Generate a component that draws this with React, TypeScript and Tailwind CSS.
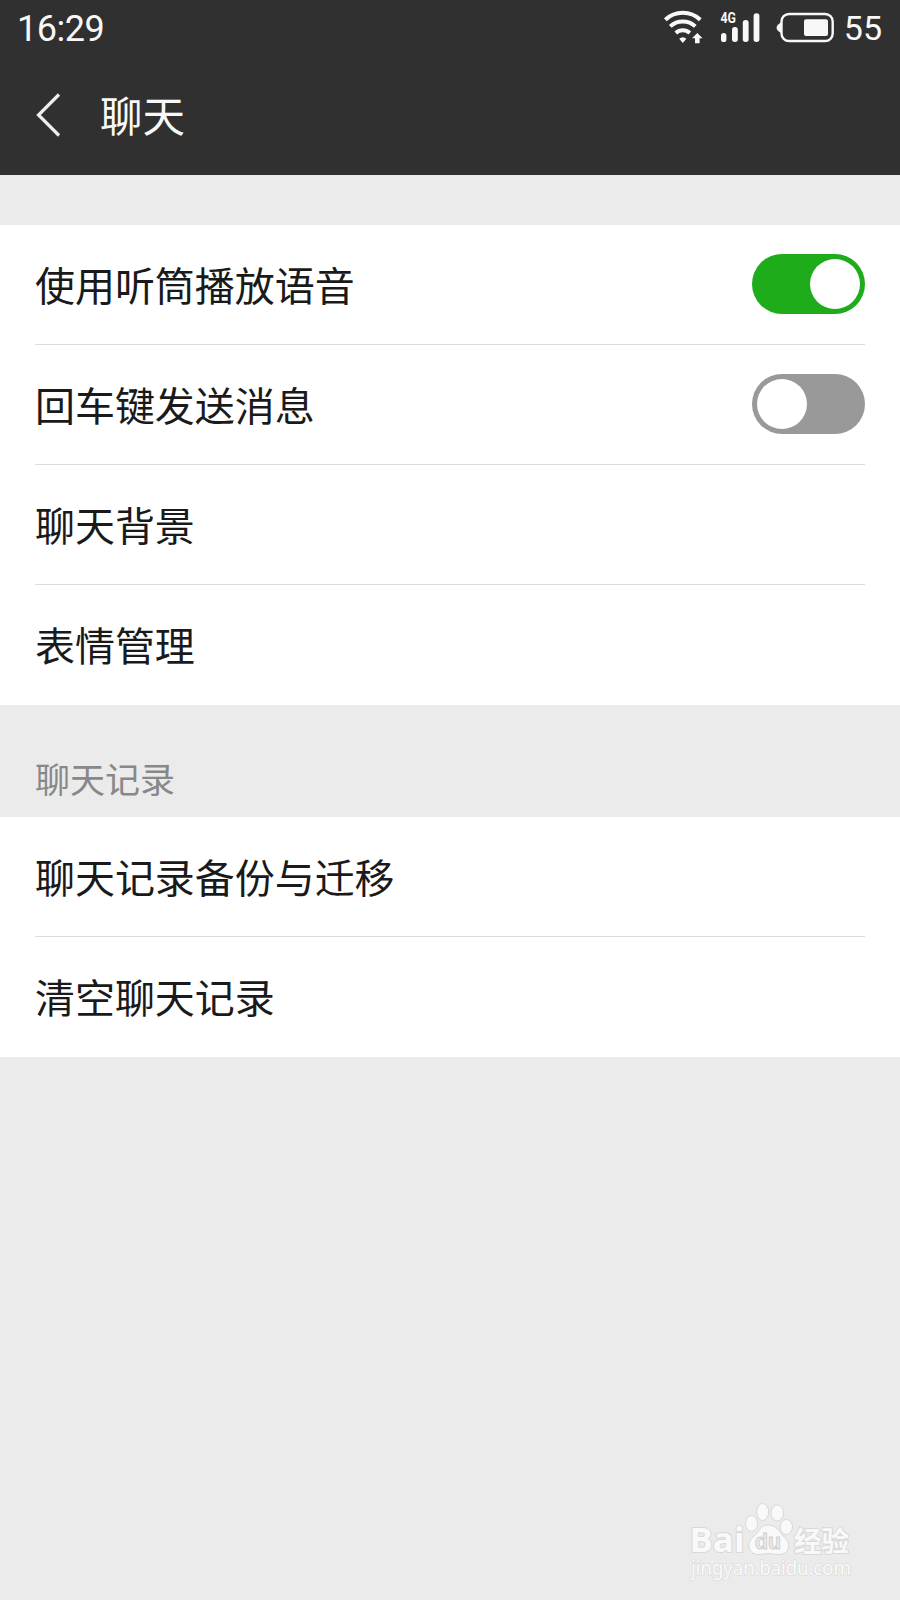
import type { ReactNode } from 'react';

function Toggle({ on }: { on: boolean }) {
  return (
    <button
      role="switch"
      aria-checked={on}
      className={
        on
          ? 'mb-[2px] flex h-[60px] w-[113px] items-center justify-end rounded-full bg-[#1eac1b] p-[5px]'
          : 'mb-[2px] flex h-[60px] w-[113px] items-center justify-start rounded-full bg-[#999999] p-[5px]'
      }
    >
      <span className="size-[50px] rounded-full bg-white" />
    </button>
  );
}

function Row({ label, last, children }: { label: string; last?: boolean; children?: ReactNode }) {
  return (
    <div
      className={
        last
          ? 'flex h-[120px] items-center justify-between'
          : 'flex h-[120px] items-center justify-between border-b border-[#dcdcdc]'
      }
    >
      <span
        className={
          last
            ? 'pb-[2px] text-[40px] leading-[60px] tracking-[-0.05px] text-[#1a1a1a]'
            : 'pb-[1px] text-[40px] leading-[60px] tracking-[-0.05px] text-[#1a1a1a]'
        }
      >
        {label}
      </span>
      {children}
    </div>
  );
}

function StatusBar() {
  return (
    <div className="flex h-14 items-center justify-between pt-[2px] pr-[18px] pl-[17px] font-['Roboto',sans-serif] text-[#f8f8f8]">
      <span className="text-[36px] leading-14 tracking-[-0.5px]">16:29</span>
      <div className="flex h-14 items-center">
        <svg className="h-14 w-[42px]" viewBox="0 0 42 56" fill="none" stroke="#f8f8f8">
          <path d="M2.300 18.800a25.500 25.500 0 0 1 35 0" strokeWidth="4" />
          <path d="M7.300 25.400a18.300 18.300 0 0 1 25 0" strokeWidth="4" />
          <path d="M12.800 32a10.500 10.500 0 0 1 14 0" strokeWidth="4" />
          <path d="M16.200 37.800q3.600-3.200 7.200 0L19.800 42z" fill="#f8f8f8" stroke="none" />
          <path d="M34.300 32l5.300 5.300h-3v5h-4.600v-5h-3z" fill="#f8f8f8" stroke="none" />
        </svg>
        <svg className="ml-[15px] h-14 w-[44px]" viewBox="0 0 44 56" fill="#f8f8f8">
          <text x="0.500" y="22" fontSize="14" fontWeight="700" textLength="15.500" lengthAdjust="spacingAndGlyphs" fontFamily="Roboto, sans-serif">4G</text>
          <rect x="1" y="32" width="5.400" height="9" rx="2.600" />
          <rect x="12" y="26" width="5.800" height="15" rx="2.700" />
          <rect x="22.800" y="19" width="5.800" height="22" rx="2.700" />
          <rect x="33.600" y="12.300" width="5.800" height="28.700" rx="2.700" />
        </svg>
        <svg className="ml-[12px] h-14 w-[60px]" viewBox="0 0 60 56" fill="none">
          <rect x="5.500" y="13" width="51.200" height="27" rx="7.500" stroke="#f8f8f8" strokeWidth="2.400" />
          <path d="M5 21.500q-4.400 2.200-4.400 5.200t4.400 5.200z" fill="#f8f8f8" />
          <rect x="28" y="18.300" width="24" height="16.700" rx="2" fill="#f8f8f8" />
        </svg>
        <span className="ml-[8px] pb-[2px] text-[34px] leading-[54px]">55</span>
      </div>
    </div>
  );
}

function Watermark() {
  return (
    <svg
      className="absolute right-[40px] bottom-[14px] h-[90px] w-[180px]"
      viewBox="0 0 180 90"
      fill="#f9f9f9"
      stroke="#d8d8d8"
      strokeWidth="1"
    >
      <g fontWeight="700" paintOrder="stroke" strokeWidth="2">
        <text x="9.500" y="56" fontSize="34" textLength="55" lengthAdjust="spacingAndGlyphs" fontFamily="Open Sans, sans-serif">Bai</text>
        <text x="114" y="56" fontSize="28" textLength="55" lengthAdjust="spacingAndGlyphs" fontFamily="Noto Sans CJK SC, sans-serif">经验</text>
      </g>
      <ellipse cx="71.500" cy="27.500" rx="6" ry="8" />
      <ellipse cx="82.700" cy="16" rx="6" ry="8.500" />
      <ellipse cx="97.300" cy="17" rx="6.300" ry="8" />
      <ellipse cx="106.300" cy="31" rx="6.200" ry="7.500" />
      <path d="M88 29c6 0 9 3 12.500 8 3.500 4.500 8 6.500 8 12.500 0 6-4 9-9.500 9-4 0-7-1-10-1s-7 1-11 1c-5.500 0-9-3.500-9-9 0-6 4.500-8.500 8-12.500 3.500-5 6-8 11-8z" />
      <text x="75" y="53" fontSize="22" fontWeight="700" textLength="26" lengthAdjust="spacingAndGlyphs" fill="#ececec" stroke="#cfcfcf" fontFamily="Liberation Sans, sans-serif">du</text>
      <text x="11" y="79" fontSize="19" paintOrder="stroke" strokeWidth="1.200" textLength="160" lengthAdjust="spacing" fontFamily="Noto Sans, sans-serif">jingyan.baidu.com</text>
    </svg>
  );
}

export default function App() {
  return (
    <div className="relative h-[1600px] w-[900px] overflow-hidden bg-[#ebebeb] font-['Noto_Sans_CJK_SC',sans-serif]">
      <header className="h-[175px] bg-[#303030]">
        <StatusBar />
        <div className="flex h-[118px] items-center pl-[35px]">
          <svg className="h-[44px] w-[26px]" viewBox="0 0 26 44" fill="none" stroke="#eeeeee" strokeWidth="3.200">
            <path d="M24 1.500L3.500 22 24 42.500" />
          </svg>
          <h1 className="ml-[39px] pb-[3px] text-[42.500px] leading-[60px] text-[#f8f8f8]">聊天</h1>
        </div>
      </header>
      <main>
        <section className="mt-[50px] bg-white px-[35px]">
          <Row label="使用听筒播放语音">
            <Toggle on />
          </Row>
          <Row label="回车键发送消息">
            <Toggle on={false} />
          </Row>
          <Row label="聊天背景" />
          <Row label="表情管理" last />
        </section>
        <h2 className="flex h-[112px] items-end px-[35px] pb-[14px] text-[35px] leading-[50px] text-[#888888]">聊天记录</h2>
        <section className="bg-white px-[35px]">
          <Row label="聊天记录备份与迁移" />
          <Row label="清空聊天记录" last />
        </section>
      </main>
      <Watermark />
    </div>
  );
}
